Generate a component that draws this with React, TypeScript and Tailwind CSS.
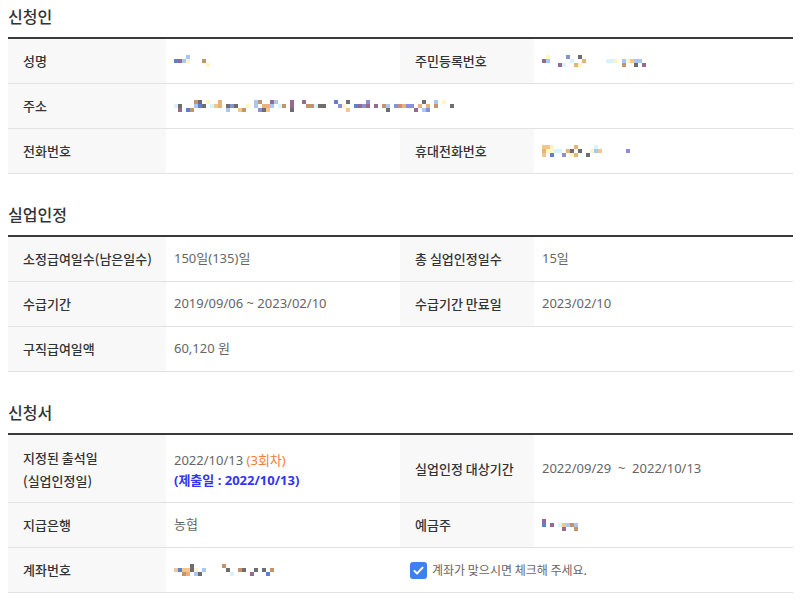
import type { ReactNode } from "react";

const palette = ["#f3c68c", "#6d6d6d", "#8b8fd8", "#a8c8f2", "#c49468", "#fff6c4", "#d6f3ff", "#97698c", "#5d80d2", "#e9b276"];

function Mosaic({ seed, cols, gaps = [] }: { seed: number; cols: number; gaps?: [number, number][] }) {
  let s = seed;
  const rnd = () => {
    s = (s * 9301 + 49297) % 233280;
    return s / 233280;
  };
  const fill = [0.2, 0.55, 0.3];
  const rows = fill.map((p) =>
    Array.from({ length: cols }, (_, i) => {
      const inGap = gaps.some(([a, b]) => i >= a && i < b);
      const on = rnd() < p && !inGap;
      const c = palette[Math.floor(rnd() * palette.length)];
      return on ? c : "transparent";
    })
  );
  return (
    <div className="flex flex-col">
      {rows.map((r, ri) => (
        <div key={ri} className="flex">
          {r.map((c, ci) => (
            <span key={ci} className="w-[4px] h-[4px]" style={{ backgroundColor: c }} />
          ))}
        </div>
      ))}
    </div>
  );
}

function Label({ children, className = "" }: { children: ReactNode; className?: string }) {
  return (
    <div className={`bg-[#f8f8f8] pl-[15px] flex items-center text-[13px] font-medium text-[#333] ${className}`}>
      {children}
    </div>
  );
}

function Value({ children, className = "" }: { children?: ReactNode; className?: string }) {
  return (
    <div
      className={`pl-[8px] flex items-center text-[13px] text-[#666] ${className}`}
      style={{ fontFamily: '"Noto Sans", "Noto Sans CJK KR", sans-serif' }}
    >
      {children}
    </div>
  );
}

function Row({ children, h = "h-[45px]" }: { children: ReactNode; h?: string }) {
  return (
    <div className={`grid grid-cols-[158px_234px_134px_259px] border-b border-[#e2e2e2] ${h}`}>{children}</div>
  );
}

function Section({ title, first, children }: { title: string; first?: boolean; children: ReactNode }) {
  return (
    <section className={first ? "pt-[4px]" : "pt-[28px]"}>
      <h2 className="h-[24px] leading-[24px] text-[16px] font-medium text-[#333]">{title}</h2>
      <div className="mt-[9px] border-t-2 border-[#3a3a3a]">{children}</div>
    </section>
  );
}

export default function App() {
  return (
    <div
      className="w-[808px] h-[600px] bg-white overflow-hidden"
      style={{ fontFamily: '"Noto Sans CJK KR", "Noto Sans", sans-serif' }}
    >
      <div className="ml-[8px] w-[785px]">
        <Section title="신청인" first>
          <Row>
            <Label>성명</Label>
            <Value>
              <Mosaic seed={11} cols={9} />
            </Value>
            <Label>주민등록번호</Label>
            <Value>
              <Mosaic seed={27} cols={28} gaps={[[11, 16]]} />
            </Value>
          </Row>
          <Row>
            <Label>주소</Label>
            <Value className="col-span-3">
              <Mosaic seed={53} cols={70} />
            </Value>
          </Row>
          <Row>
            <Label>전화번호</Label>
            <Value />
            <Label>휴대전화번호</Label>
            <Value>
              <Mosaic seed={71} cols={22} gaps={[[15, 20]]} />
            </Value>
          </Row>
        </Section>

        <Section title="실업인정">
          <Row>
            <Label>소정급여일수(남은일수)</Label>
            <Value>150일(135)일</Value>
            <Label>총 실업인정일수</Label>
            <Value>15일</Value>
          </Row>
          <Row>
            <Label>수급기간</Label>
            <Value>2019/09/06 ~ 2023/02/10</Value>
            <Label>수급기간 만료일</Label>
            <Value>2023/02/10</Value>
          </Row>
          <Row>
            <Label>구직급여일액</Label>
            <Value>60,120 원</Value>
            <div className="col-span-2" />
          </Row>
        </Section>

        <Section title="신청서">
          <Row h="h-[68px]">
            <Label className="leading-[23px]">
              <div>
                지정된 출석일
                <br />
                (실업인정일)
              </div>
            </Label>
            <Value className="leading-[20px]">
              <div className="pt-[2px]">
                <div>
                  2022/10/13 <span className="text-[#f47c3c]">(3회차)</span>
                </div>
                <div className="font-bold text-[#3434f2]">(제출일 : 2022/10/13)</div>
              </div>
            </Value>
            <Label>실업인정 대상기간</Label>
            <Value>2022/09/29&nbsp;&nbsp;~&nbsp;&nbsp;2022/10/13</Value>
          </Row>
          <Row>
            <Label>지급은행</Label>
            <Value>농협</Value>
            <Label>예금주</Label>
            <Value>
              <Mosaic seed={97} cols={9} />
            </Value>
          </Row>
          <Row>
            <Label>계좌번호</Label>
            <Value>
              <Mosaic seed={131} cols={25} gaps={[[8, 12]]} />
            </Value>
            <div className="col-span-2 flex items-center pl-[10px] gap-[5px] text-[12px] text-[#666]">
              <span className="w-[17px] h-[17px] rounded-[3px] bg-[#3f80ee] flex items-center justify-center">
                <svg width="13" height="13" viewBox="0 0 16 16" fill="none">
                  <path d="M3 8.5l3.2 3.2L13 4.5" stroke="white" strokeWidth="2.4" strokeLinecap="round" strokeLinejoin="round" />
                </svg>
              </span>
              계좌가 맞으시면 체크해 주세요.
            </div>
          </Row>
        </Section>
      </div>
    </div>
  );
}
